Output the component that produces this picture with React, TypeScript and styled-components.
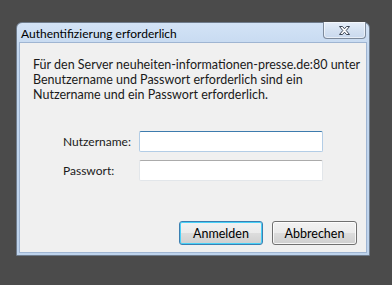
import React from "react";
import styled, { createGlobalStyle } from "styled-components";

const FONT = `Lato, "Noto Sans", sans-serif`;

const Global = createGlobalStyle`
  html, body { margin: 0; padding: 0; background: #4b4b4b; }
  body { font-family: ${FONT}; }
`;

const Page = styled.div`
  width: 392px;
  height: 285px;
  padding: 22px 0 0 16px;
  box-sizing: border-box;
  background: #4b4b4b;
`;

const Window = styled.div`
  width: 354px;
  height: 234px;
  box-sizing: border-box;
  display: flex;
  flex-direction: column;
  border: 1px solid #6f7c8c;
  border-radius: 6px 6px 0 0;
  padding: 0 2px 2px 2px;
  background: linear-gradient(#d3e3f6, #c3d7ef 30px, #bed3ec);
`;

const TitleBar = styled.div`
  height: 19px;
  display: flex;
  align-items: flex-start;
  flex-shrink: 0;
`;

const Title = styled.div`
  font-size: 12px;
  line-height: 16px;
  padding: 3px 0 0 2px;
  color: #000;
  white-space: nowrap;
`;

const CloseButton = styled.div`
  margin-left: auto;
  margin-right: 1px;
  margin-top: -1px;
  width: 43px;
  height: 17px;
  box-sizing: border-box;
  border: 1px solid #7d8a9b;
  border-top: none;
  border-radius: 0 0 4px 4px;
  background: linear-gradient(#e6eef9, #d5e2f2 50%, #c9d9ee);
  box-shadow: inset 0 0 0 1px rgba(255,255,255,0.55);
  display: flex;
  align-items: center;
  justify-content: center;
`;

const Content = styled.div`
  flex: 1;
  border: 1px solid #9fb5d2;
  background: #f0f0f0;
  display: flex;
  flex-direction: column;
  padding: 14px 9px 7px 13px;
  box-sizing: border-box;
`;

const Message = styled.p`
  margin: 0;
  font-size: 12.5px;
  line-height: 15px;
  color: #1a1a1a;
  white-space: nowrap;
`;

const Form = styled.div`
  margin-top: 29px;
  margin-left: 30px;
  display: grid;
  grid-template-columns: 76px 184px;
  row-gap: 8px;
  align-items: center;
`;

const Label = styled.label`
  font-size: 12px;
  color: #1a1a1a;
`;

const Input = styled.div<{ $focused?: boolean }>`
  height: 21px;
  box-sizing: border-box;
  background: #fff;
  border: 1px solid ${(p) => (p.$focused ? "#b3cde6" : "#e2e6ea")};
  border-top-color: ${(p) => (p.$focused ? "#3d7bad" : "#ababab")};
  border-radius: 2px;
`;

const Buttons = styled.div`
  margin-top: auto;
  display: flex;
  justify-content: flex-end;
  gap: 9px;
`;

const Button = styled.button<{ $default?: boolean; $w: number }>`
  width: ${(p) => p.$w}px;
  height: 24px;
  box-sizing: border-box;
  font-family: ${FONT};
  font-size: 12.5px;
  color: #000;
  padding: 0;
  border: 1px solid ${(p) => (p.$default ? "#3c7fb1" : "#707070")};
  border-radius: 3px;
  background: linear-gradient(#f2f2f2, #ebebeb 50%, #dddddd 50%, #cfcfcf);
  box-shadow: inset 0 0 0 1px ${(p) => (p.$default ? "#48d1f8" : "rgba(255,255,255,0.8)")};
`;

const CloseIcon = () => (
  <svg width="13" height="11" viewBox="0 0 13 11">
    <path
      d="M1.5 1.5 H4.5 L6.5 3.8 L8.5 1.5 H11.5 L8.2 5.5 L11.5 9.5 H8.5 L6.5 7.2 L4.5 9.5 H1.5 L4.8 5.5 Z"
      fill="#fff"
      stroke="#3c4656"
      strokeWidth="1"
      strokeLinejoin="round"
    />
  </svg>
);

export default function App() {
  return (
    <Page>
      <Global />
      <Window>
        <TitleBar>
          <Title>Authentifizierung erforderlich</Title>
          <CloseButton>
            <CloseIcon />
          </CloseButton>
        </TitleBar>
        <Content>
          <Message>
            Für den Server neuheiten-informationen-presse.de:80 unter
            <br />
            Benutzername und Passwort erforderlich sind ein
            <br />
            Nutzername und ein Passwort erforderlich.
          </Message>
          <Form>
            <Label>Nutzername:</Label>
            <Input $focused />
            <Label>Passwort:</Label>
            <Input />
          </Form>
          <Buttons>
            <Button $default $w={84}>Anmelden</Button>
            <Button $w={85}>Abbrechen</Button>
          </Buttons>
        </Content>
      </Window>
    </Page>
  );
}
